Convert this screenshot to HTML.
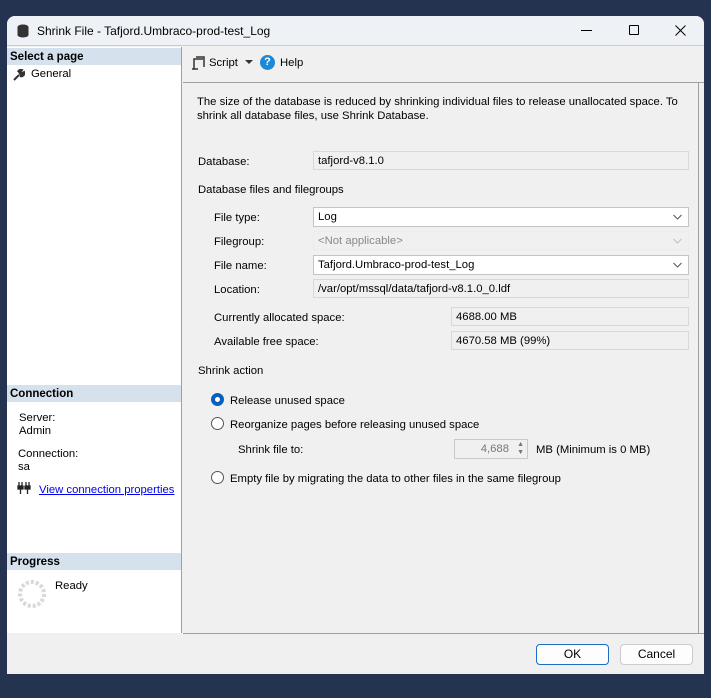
<!DOCTYPE html>
<html><head><style>
*{margin:0;padding:0;box-sizing:border-box}
body{width:711px;height:698px;background:#243350;font-family:"Liberation Sans",sans-serif;font-size:11.3px;color:#000;position:relative;overflow:hidden}
.win{position:absolute;left:7px;top:16px;width:697px;height:658px;background:#f0f0f0;border-radius:8px 8px 0 0;overflow:hidden}
.title{position:absolute;left:0;top:0;width:100%;height:30px;background:#eef2f7;border-bottom:1px solid #c8ccd2}
.abs{position:absolute;white-space:nowrap}
.t{margin-top:1px}
.left{position:absolute;left:0;top:31px;width:175px;height:586px;background:#fff;border-right:1px solid #a0a0a0}
.hdr{position:absolute;left:0;width:174px;height:17px;background:#d5e1ed;font-weight:bold;padding:3px 0 0 3px;font-size:11.5px}
.box{position:absolute;height:19px;background:#f0f0f0;border:1px solid #d9d9d9;padding:3px 4px 0;white-space:nowrap}
.combo{background:#fff;border-color:#c4c4c4}
.chev{position:absolute;right:6px;top:6px}
.radio{position:absolute;width:13px;height:13px;border-radius:50%;border:1px solid #555;background:#fff}
.btn{position:absolute;top:628px;width:73px;height:21px;border:1px solid #ccc;border-radius:4px;background:#fdfdfd;text-align:center;line-height:19px;font-size:12px}
</style></head><body>
<div class="win">
 <div class="title">
  <svg class="abs" style="left:10px;top:8px" width="12" height="14"><ellipse cx="6" cy="3" rx="5.5" ry="2.5" fill="#333"/><rect x="0.5" y="3" width="11" height="8" fill="#333"/><ellipse cx="6" cy="11" rx="5.5" ry="2.5" fill="#333"/></svg>
  <div class="abs" style="left:30px;top:8px;font-size:12px">Shrink File - Tafjord.Umbraco-prod-test_Log</div>
  <div class="abs" style="left:574px;top:14px;width:11px;height:1px;background:#000"></div>
  <div class="abs" style="left:622px;top:9px;width:10px;height:10px;border:1px solid #000;border-radius:1px"></div>
  <svg class="abs" style="left:668px;top:9px" width="11" height="11"><path d="M0.5 0.5L10.5 10.5M10.5 0.5L0.5 10.5" stroke="#000"/></svg>
 </div>
 <div class="left">
  <div class="hdr" style="top:1px">Select a page</div>
  <svg class="abs" style="left:6px;top:22px" width="12" height="12"><path d="M1 11L6 6M5 3a3 3 0 0 1 4-2L7.5 3 9 4.5 11 3a3 3 0 0 1-4 4" stroke="#333" stroke-width="2" fill="#333"/></svg>
  <div class="abs t" style="left:24px;top:20px">General</div>
  <div class="hdr" style="top:338px">Connection</div>
  <div class="abs t" style="left:12px;top:364px;line-height:13px">Server:<br>Admin</div>
  <div class="abs t" style="left:11px;top:400px;line-height:13px">Connection:<br>sa</div>
  <svg class="abs" style="left:10px;top:435px" width="14" height="12"><path d="M2 0v4M5 0v4M1 4h5v3H1zM3.5 7v5M9 0v4M12 0v4M8 4h5v3H8zM10.5 7v5" stroke="#222" stroke-width="1.3" fill="#222"/></svg>
  <div class="abs t" style="left:32px;top:436px;color:#0000ee;text-decoration:underline">View connection properties</div>
  <div class="hdr" style="top:506px">Progress</div>
  <svg class="abs" style="left:10px;top:532px" width="30" height="30"><circle cx="15" cy="15" r="12" fill="none" stroke="#d8d8d8" stroke-width="4" stroke-dasharray="3 2"/></svg>
  <div class="abs t" style="left:48px;top:532px">Ready</div>
 </div>
 <div class="abs" style="left:176px;top:31px;width:521px;height:36px;background:#f0f0f0;border-bottom:1px solid #a0a0a0"></div>
 <div class="abs" style="left:691px;top:67px;width:1px;height:551px;background:#a0a0a0"></div>
 <svg class="abs" style="left:184px;top:40px" width="14" height="14"><path d="M3 13V3h9M5 1h8v10M1 13h6" stroke="#333" stroke-width="1.5" fill="none"/></svg>
 <div class="abs t" style="left:202px;top:40px">Script</div>
 <div class="abs" style="left:238px;top:44px;border-left:4px solid transparent;border-right:4px solid transparent;border-top:4px solid #333"></div>
 <div class="abs" style="left:253px;top:39px;width:15px;height:15px;border-radius:50%;background:#1e88d8;color:#fff;font-weight:bold;font-size:11px;text-align:center;line-height:15px">?</div>
 <div class="abs t" style="left:273px;top:40px">Help</div>
 <div class="abs" style="left:176px;top:617px;width:521px;height:1px;background:#a0a0a0"></div>
 <div class="abs t" style="left:190px;top:78px;line-height:14px">The size of the database is reduced by shrinking individual files to release unallocated space. To<br>shrink all database files, use Shrink Database.</div>
 <div class="abs t" style="left:191px;top:139px">Database:</div>
 <div class="box" style="left:306px;top:135px;width:376px">tafjord-v8.1.0</div>
 <div class="abs t" style="left:191px;top:167px">Database files and filegroups</div>
 <div class="abs t" style="left:207px;top:195px">File type:</div>
 <div class="box combo" style="left:306px;top:191px;width:376px;height:20px">Log<svg class="chev" width="9" height="6"><path d="M0.5 1L4.5 5 8.5 1" stroke="#555" fill="none"/></svg></div>
 <div class="abs t" style="left:207px;top:219px">Filegroup:</div>
 <div class="box" style="left:306px;top:215px;width:376px;color:#8a8a8a;border-color:#ececec">&lt;Not applicable&gt;<svg class="chev" width="9" height="6"><path d="M0.5 1L4.5 5 8.5 1" stroke="#c0c0c0" fill="none"/></svg></div>
 <div class="abs t" style="left:207px;top:243px">File name:</div>
 <div class="box combo" style="left:306px;top:239px;width:376px;height:20px">Tafjord.Umbraco-prod-test_Log<svg class="chev" width="9" height="6"><path d="M0.5 1L4.5 5 8.5 1" stroke="#555" fill="none"/></svg></div>
 <div class="abs t" style="left:207px;top:267px">Location:</div>
 <div class="box" style="left:306px;top:263px;width:376px">/var/opt/mssql/data/tafjord-v8.1.0_0.ldf</div>
 <div class="abs t" style="left:207px;top:295px">Currently allocated space:</div>
 <div class="box" style="left:444px;top:291px;width:238px">4688.00 MB</div>
 <div class="abs t" style="left:207px;top:319px">Available free space:</div>
 <div class="box" style="left:444px;top:315px;width:238px">4670.58 MB (99%)</div>
 <div class="abs t" style="left:191px;top:348px">Shrink action</div>
 <div class="radio" style="left:204px;top:377px;border:4px solid #0a5fb8"></div>
 <div class="abs t" style="left:223px;top:378px">Release unused space</div>
 <div class="radio" style="left:204px;top:401px"></div>
 <div class="abs t" style="left:223px;top:402px">Reorganize pages before releasing unused space</div>
 <div class="abs t" style="left:231px;top:427px">Shrink file to:</div>
 <div class="box" style="left:447px;top:423px;width:74px;height:20px;text-align:right;color:#777;padding-right:18px;border-color:#c8c8c8">4,688<span class="abs" style="right:3px;top:1px;font-size:7px;line-height:8px;color:#777">&#9650;<br>&#9660;</span></div>
 <div class="abs t" style="left:529px;top:427px">MB (Minimum is 0 MB)</div>
 <div class="radio" style="left:204px;top:455px"></div>
 <div class="abs t" style="left:223px;top:456px">Empty file by migrating the data to other files in the same filegroup</div>
 <div class="btn" style="left:529px;border:1px solid #1a6fc0">OK</div>
 <div class="btn" style="left:613px">Cancel</div>
</div>
</body></html>
